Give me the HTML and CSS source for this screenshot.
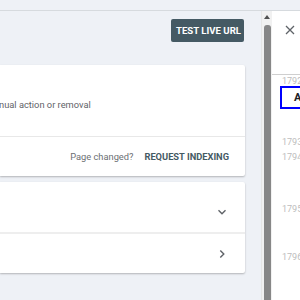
FILE: index.html
```html
<!DOCTYPE html>
<html>
<head>
<meta charset="utf-8">
<link rel="stylesheet" href="styles.css">
</head>
<body>
<div class="topbar"></div>
<div class="layout">
  <main class="main">
    <div class="toolbar"><button class="btn">TEST LIVE URL</button></div>
    <section class="card">
      <div class="card-body"><p class="desc">nual action or removal</p></div>
      <div class="card-footer">
        <span class="hint">Page changed?</span>
        <button class="link">REQUEST INDEXING</button>
      </div>
    </section>
    <section class="card panels">
      <div class="row row-open">
        <svg class="chev" width="10" height="10" viewBox="0 0 10 10"><path d="M1.5 3.2 5 6.7 8.5 3.2" fill="none" stroke="#5f6368" stroke-width="1.4"/></svg>
      </div>
      <div class="row row-closed">
        <svg class="chev" width="10" height="10" viewBox="0 0 10 10"><path d="M3.3 1.5 6.8 5 3.3 8.5" fill="none" stroke="#5f6368" stroke-width="1.4"/></svg>
      </div>
    </section>
  </main>
  <div class="scrollbar">
    <div class="arrow"></div>
    <div class="thumb"></div>
  </div>
  <aside class="side">
    <div class="side-head">
      <svg class="close" width="10" height="10" viewBox="0 0 10 10"><path d="M1 1 9 9M9 1 1 9" stroke="#5f6368" stroke-width="1.3"/></svg>
    </div>
    <div class="code">
      <div class="ln l1">1792</div>
      <div class="hl">A</div>
      <div class="ln l3">1793</div>
      <div class="ln l4">1794</div>
      <div class="ln l5">1795</div>
      <div class="ln l6">1796</div>
    </div>
  </aside>
</div>
</body>
</html>
```
FILE: styles.css
```css
html, body {
  margin: 0;
  padding: 0;
  width: 300px;
  height: 300px;
  overflow: hidden;
  background: #eef1f6;
  font-family: Roboto, "Liberation Sans", sans-serif;
}
.topbar {
  height: 10px;
  border-bottom: 1px solid #d6dade;
  background: #eef1f6;
}
.layout {
  display: flex;
  height: 289px;
}
.main {
  width: 261px;
  flex: none;
  padding-right: 16px;
  box-sizing: border-box;
}
.toolbar {
  display: flex;
  justify-content: flex-end;
  padding-top: 8px;
  padding-right: 1px;
}
.btn {
  width: 73px;
  height: 23px;
  border: 0;
  border-radius: 2px;
  background: #455a64;
  color: #fff;
  font-family: Roboto, "Liberation Sans", sans-serif;
  font-weight: 700;
  font-size: 9.6px;
  padding: 0 0 0 2px;
}
.card {
  background: #fff;
  box-shadow: 0 1px 2px rgba(0,0,0,0.25);
  border-radius: 0 2px 2px 0;
}
.card:first-of-type {
  margin-top: 23px;
}
.card-body {
  height: 72px;
  box-sizing: border-box;
  padding-top: 33px;
  border-bottom: 1px solid #e8e8e8;
}
.desc {
  margin: 0;
  font-size: 9.3px;
  line-height: 13px;
  color: #5f6368;
  margin-left: -1px;
}
.card-footer {
  height: 39px;
  display: flex;
  align-items: center;
  justify-content: flex-end;
  padding-right: 16px;
}
.hint {
  font-size: 9.3px;
  color: #6b6f73;
  margin-right: 11px;
}
.link {
  border: 0;
  background: none;
  padding: 0;
  font-family: Roboto, "Liberation Sans", sans-serif;
  font-weight: 700;
  font-size: 9.3px;
  color: #455a64;
}
.panels {
  margin-top: 6px;
}
.row {
  display: flex;
  justify-content: flex-end;
  padding-right: 18px;
  box-sizing: border-box;
}
.row-open {
  height: 52px;
  padding-top: 25px;
  border-bottom: 2px solid #eeeeee;
}
.row-closed {
  height: 39px;
  align-items: center;
}
.scrollbar {
  width: 11px;
  flex: none;
  background: #f1f1f1;
  border-left: 1px solid #e6e6e6;
  box-sizing: border-box;
  display: flex;
  flex-direction: column;
  align-items: center;
}
.arrow {
  margin-top: 4px;
  width: 0;
  height: 0;
  border-left: 3px solid transparent;
  border-right: 3px solid transparent;
  border-bottom: 4px solid #505050;
}
.thumb {
  margin-top: 6px;
  width: 7px;
  flex: 1;
  background: #878787;
  border-radius: 3px 3px 0 0;
}
.side {
  width: 28px;
  flex: none;
  background: #fff;
  overflow: hidden;
}
.side-head {
  height: 64px;
  border-bottom: 1px solid #cfcfcf;
  padding: 14px 0 0 13px;
  box-sizing: border-box;
}
.close {
  display: block;
}
.code {
  padding-top: 1px;
  white-space: nowrap;
}
.ln {
  font-size: 9px;
  line-height: 10px;
  height: 10px;
  color: #bdbdbd;
  padding-left: 10px;
}
.hl {
  margin-left: 8px;
  height: 23px;
  box-sizing: border-box;
  width: 40px;
  border: 2px solid #0000ff;
  font-size: 11px;
  font-weight: 700;
  color: #202124;
  line-height: 19px;
  padding-left: 12px;
}
.l3 { margin-top: 28px; }
.l4 { margin-top: 5px; }
.l5 { margin-top: 42px; }
.l6 { margin-top: 38px; }
```
